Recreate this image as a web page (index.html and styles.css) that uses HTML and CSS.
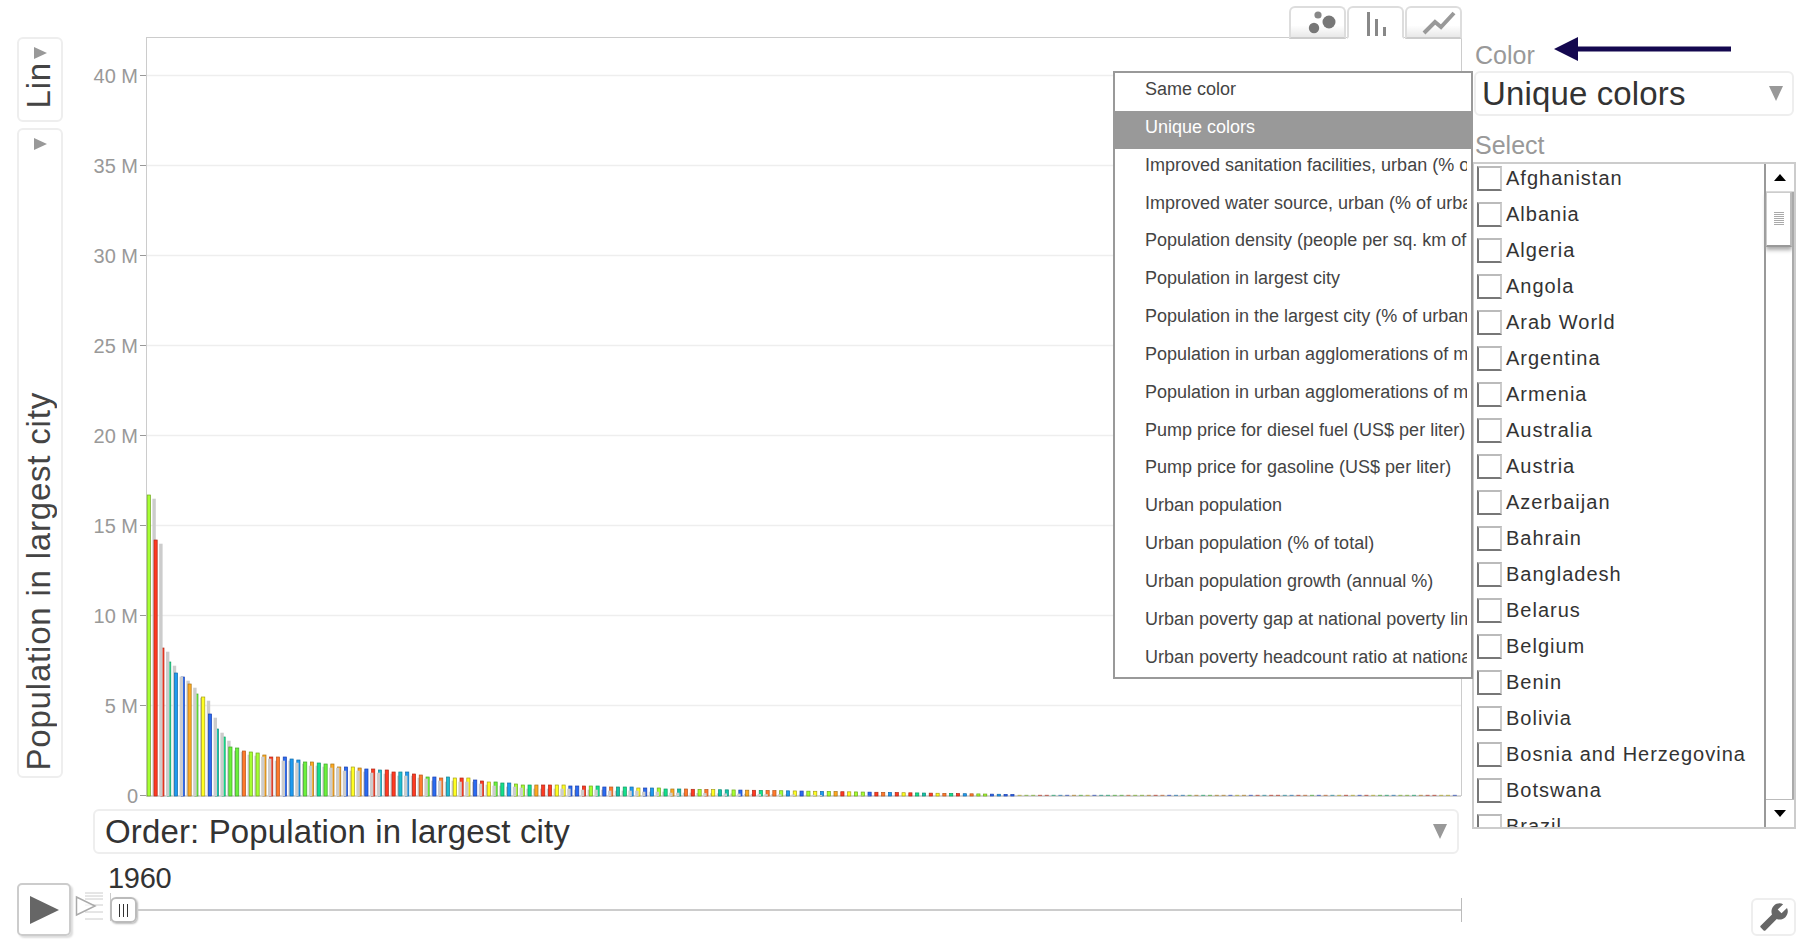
FILE: index.html
```html
<!DOCTYPE html>
<html lang="en">
<head>
  <meta charset="UTF-8">
  <title>Motion chart</title>
  <link rel="stylesheet" href="styles.css">
</head>
<body>
  <div class="main">
    <!-- Y axis controls -->
    <div class="rail">
      <div class="rail-box rail-scale">
        <span class="tri-right"></span>
        <span class="rail-label">Lin</span>
      </div>
      <div class="rail-box rail-axis">
        <span class="tri-right"></span>
        <span class="rail-label">Population in largest city</span>
      </div>
    </div>

    <!-- Chart -->
    <div class="chart-col">
      <div class="tabs">
        <div class="tab">
          <svg class="tab-bubbles" width="30" height="26" viewBox="0 0 30 26"><circle cx="10" cy="5" r="3.6" fill="#888"/><circle cx="21" cy="12" r="6.5" fill="#777"/><circle cx="6" cy="18" r="5.2" fill="#777"/></svg>
        </div>
        <div class="tab tab-active">
          <svg width="30" height="26" viewBox="0 0 30 26"><rect x="6" y="2" width="3" height="24" fill="#888"/><rect x="14" y="9" width="3" height="17" fill="#888"/><rect x="22" y="17" width="3" height="9" fill="#888"/></svg>
        </div>
        <div class="tab">
          <svg class="tab-line" width="34" height="26" viewBox="0 0 34 26"><polyline points="2,23 13,12 19,17 32,3" fill="none" stroke="#999" stroke-width="4"/></svg>
        </div>
      </div>
      <svg id="plot" class="plot" width="1369" height="770" viewBox="93 37 1369 770"></svg>
      <div class="dropdown dropdown-order">
        <span>Order: Population in largest city</span>
        <span class="tri-down"></span>
      </div>
    </div>

    <!-- Color and select -->
    <div class="side">
      <div class="side-label">Color</div>
      <div class="dropdown dropdown-color">
        <span>Unique colors</span>
        <span class="tri-down"></span>
      </div>
      <div class="side-label side-label-select">Select</div>
      <div class="list">
        <div class="list-rows">
          <div class="row"><span class="check"></span>Afghanistan</div>
          <div class="row"><span class="check"></span>Albania</div>
          <div class="row"><span class="check"></span>Algeria</div>
          <div class="row"><span class="check"></span>Angola</div>
          <div class="row"><span class="check"></span>Arab World</div>
          <div class="row"><span class="check"></span>Argentina</div>
          <div class="row"><span class="check"></span>Armenia</div>
          <div class="row"><span class="check"></span>Australia</div>
          <div class="row"><span class="check"></span>Austria</div>
          <div class="row"><span class="check"></span>Azerbaijan</div>
          <div class="row"><span class="check"></span>Bahrain</div>
          <div class="row"><span class="check"></span>Bangladesh</div>
          <div class="row"><span class="check"></span>Belarus</div>
          <div class="row"><span class="check"></span>Belgium</div>
          <div class="row"><span class="check"></span>Benin</div>
          <div class="row"><span class="check"></span>Bolivia</div>
          <div class="row"><span class="check"></span>Bosnia and Herzegovina</div>
          <div class="row"><span class="check"></span>Botswana</div>
          <div class="row"><span class="check"></span>Brazil</div>
        </div>
        <div class="scrollbar">
          <div class="scroll-btn"><span class="arrow-up"></span></div>
          <div class="scroll-track">
            <div class="scroll-thumb"><span class="grip"></span></div>
          </div>
          <div class="scroll-btn scroll-btn-down"><span class="arrow-down"></span></div>
        </div>
      </div>
      <!-- Annotation arrow -->
      <svg class="note-arrow" width="178" height="26" viewBox="0 0 178 26"><polygon points="0,13 24,1 24,10.5 177,10.5 177,15.5 24,15.5 24,25" fill="#14084f"/></svg>
    </div>

    <!-- Open color menu -->
    <div class="menu">
      <div class="menu-item"><span>Same color</span></div>
      <div class="menu-item selected"><span>Unique colors</span></div>
      <div class="menu-item"><span>Improved sanitation facilities, urban (% of urban population with access)</span></div>
      <div class="menu-item"><span>Improved water source, urban (% of urban population with access)</span></div>
      <div class="menu-item"><span>Population density (people per sq. km of land area)</span></div>
      <div class="menu-item"><span>Population in largest city</span></div>
      <div class="menu-item"><span>Population in the largest city (% of urban population)</span></div>
      <div class="menu-item"><span>Population in urban agglomerations of more than 1 million</span></div>
      <div class="menu-item"><span>Population in urban agglomerations of more than 1 million (%)</span></div>
      <div class="menu-item"><span>Pump price for diesel fuel (US$ per liter)</span></div>
      <div class="menu-item"><span>Pump price for gasoline (US$ per liter)</span></div>
      <div class="menu-item"><span>Urban population</span></div>
      <div class="menu-item"><span>Urban population (% of total)</span></div>
      <div class="menu-item"><span>Urban population growth (annual %)</span></div>
      <div class="menu-item"><span>Urban poverty gap at national poverty line (%)</span></div>
      <div class="menu-item"><span>Urban poverty headcount ratio at national poverty line</span></div>
    </div>
  </div>

  <!-- Player -->
  <div class="player">
    <div class="play-btn"><span class="play-tri"></span></div>
    <svg class="speed" width="37" height="36" viewBox="0 0 37 36">
      <g stroke="#ccc" stroke-width="1" fill="none">
        <path d="M10 3H28M10 6H28M10 9H28M10 15H28M10 22H28M10 29H28"/>
        <path d="M35.5 3V31"/>
      </g>
      <polygon points="1.5,7 1.5,25 20,16" fill="#fff" fill-opacity=".7" stroke="#aaa" stroke-width="1.5"/>
    </svg>
    <div class="slider">
      <div class="year">1960</div>
      <div class="track">
        <div class="thumb"><span class="grip-v"></span></div>
        <div class="track-line"></div>
        <div class="track-end"></div>
      </div>
    </div>
    <div class="wrench-btn">
      <svg width="30" height="30" viewBox="0 0 24 24"><path transform="translate(24 0) scale(-1 1)" d="M22.7 19l-9.1-9.1c.9-2.3.4-5-1.5-6.9-2-2-5-2.4-7.4-1.3L9 6 6 9 1.6 4.7C.4 7.1.9 10.1 2.9 12.1c1.9 1.9 4.6 2.4 6.9 1.5l9.1 9.1c.4.4 1 .4 1.4 0l2.3-2.3c.5-.4.5-1.1.1-1.4z" fill="#666"/></svg>
    </div>
  </div>

  <script src="chart.js"></script>
</body>
</html>
```

FILE: styles.css
```css
body {
  margin: 0;
  height: 948px;
  overflow: hidden;
  background: white;
  font-family: "Liberation Sans", Arial, sans-serif;
  color: #333;
}

.main {
  position: relative;
  display: flex;
  height: 861px;
}

/* Left rail */
.rail {
  width: 46px;
  margin-left: 17px;
  padding-top: 37px;
  display: flex;
  flex-direction: column;
  gap: 6px;
}
.rail-box {
  box-sizing: border-box;
  border: 2px solid #eee;
  border-radius: 6px;
  display: flex;
  flex-direction: column;
  align-items: center;
  justify-content: space-between;
  padding-top: 8px;
}
.rail-scale {
  height: 85px;
  padding-bottom: 12px;
}
.rail-axis {
  height: 650px;
  padding-bottom: 6px;
}
.rail-label {
  writing-mode: vertical-rl;
  transform: rotate(180deg);
  margin-right: 2px;
  font-size: 33px;
  line-height: 34px;
  letter-spacing: 0.8px;
  white-space: nowrap;
  color: #444;
}
.tri-right {
  width: 0;
  height: 0;
  border-left: 13px solid #999;
  border-top: 6.5px solid transparent;
  border-bottom: 6.5px solid transparent;
}
.tri-down {
  width: 0;
  height: 0;
  border-top: 15px solid #999;
  border-left: 7.5px solid transparent;
  border-right: 7.5px solid transparent;
}

/* Chart */
.chart-col {
  width: 1369px;
  margin-left: 30px;
  padding-top: 6px;
}
.tabs {
  position: relative;
  z-index: 2;
  display: flex;
  justify-content: flex-end;
  gap: 1px;
  height: 33px;
  margin-bottom: -2px;
}
.tab {
  box-sizing: border-box;
  width: 57px;
  height: 33px;
  display: flex;
  align-items: center;
  justify-content: center;
  border: 2px solid #ddd;
  border-bottom: 2px solid #ccc;
  border-radius: 6px 6px 0 0;
  background: linear-gradient(#fff 60%, #e8e8e8);
}
.tab-active {
  background: white;
  border-bottom-color: white;
}
.tab-bubbles {
  margin-left: 10px;
}
.tab-line {
  margin-left: 10px;
}
.plot {
  display: block;
  font-family: "Liberation Sans", Arial, sans-serif;
}

.dropdown {
  box-sizing: border-box;
  display: flex;
  align-items: center;
  justify-content: space-between;
  height: 45px;
  border: 2px solid #eee;
  border-radius: 6px;
  font-size: 33px;
  letter-spacing: 0.14px;
}
.dropdown-order {
  width: 1366px;
  margin-top: 2px;
  padding: 0 10px 0 10px;
}

/* Right column */
.side {
  position: relative;
  width: 324px;
  margin-left: 10px;
}
.side-label {
  margin: 41px 0 0 3px;
  font-size: 25px;
  line-height: 28px;
  height: 30px;
  color: #999;
}
.side-label-select {
  margin-top: 15px;
}
.dropdown-color {
  width: 320px;
  margin-left: 2px;
  padding: 0 9px 0 6px;
}
.note-arrow {
  position: absolute;
  left: 82px;
  top: 36px;
}

.list {
  box-sizing: border-box;
  display: flex;
  height: 667px;
  margin-top: 1px;
  border: 2px solid #ccc;
  overflow: hidden;
}
.list-rows {
  flex: 1;
  margin-top: -4px;
}
.row {
  display: flex;
  align-items: center;
  height: 36px;
  font-size: 20px;
  letter-spacing: 1px;
  padding-left: 3px;
}
.check {
  box-sizing: border-box;
  width: 25px;
  height: 25px;
  margin: 1px 4px 0 0;
  border: 2px solid #777;
  border-top-color: #bbb;
  border-right-color: #ccc;
}

.scrollbar {
  width: 28px;
  display: flex;
  flex-direction: column;
  border-left: 2px solid #999;
}
.scroll-btn {
  height: 27px;
  display: flex;
  align-items: center;
  justify-content: center;
  border-bottom: 1px solid #ddd;
}
.scroll-btn-down {
  border-bottom: 0;
  border-top: 1px solid #bbb;
}
.scroll-track {
  flex: 1;
  border-right: 2px solid #aaa;
}
.scroll-thumb {
  box-sizing: border-box;
  width: 26px;
  height: 55px;
  display: flex;
  align-items: center;
  justify-content: center;
  border: 1px solid #ccc;
  border-right: 2px solid #bbb;
  border-bottom: 2px solid #999;
  box-shadow: 0 3px 4px #aaa;
  background: white;
}
.grip {
  width: 10px;
  height: 14px;
  background: repeating-linear-gradient(#aaa 0 1px, white 1px 2px);
}
.arrow-up {
  width: 0;
  height: 0;
  border-bottom: 7px solid black;
  border-left: 6px solid transparent;
  border-right: 6px solid transparent;
}
.arrow-down {
  width: 0;
  height: 0;
  border-top: 7px solid black;
  border-left: 6px solid transparent;
  border-right: 6px solid transparent;
}

/* Menu over the chart */
.menu {
  position: absolute;
  left: 1113px;
  top: 71px;
  z-index: 5;
  box-sizing: border-box;
  width: 360px;
  height: 608px;
  border: 2px solid #999;
  background: white;
}
.menu-item {
  height: 37.85px;
  padding: 0 4px 0 30px;
  font-size: 18px;
  line-height: 33px;
  color: #444;
}
.menu-item span {
  display: block;
  overflow: hidden;
  white-space: nowrap;
}
.menu-item.selected {
  background: #999;
  color: white;
}

/* Player */
.player {
  display: flex;
  align-items: flex-end;
  height: 75px;
  padding-left: 17px;
}
.play-btn {
  box-sizing: border-box;
  width: 54px;
  height: 53px;
  display: flex;
  align-items: center;
  justify-content: center;
  border: 2px solid #ccc;
  border-radius: 5px;
  box-shadow: 2px 2px 2px #ddd;
}
.play-tri {
  width: 0;
  height: 0;
  border-left: 29px solid #666;
  border-top: 14.5px solid transparent;
  border-bottom: 14.5px solid transparent;
}
.speed {
  margin: 0 0 10px 4px;
  flex: none;
}
.slider {
  width: 1352px;
  margin: 0 0 13px -2px;
}
.year {
  margin-left: -2px;
  font-size: 29px;
  line-height: 30px;
  letter-spacing: -0.3px;
  height: 34px;
}
.track {
  display: flex;
  align-items: center;
  height: 26px;
}
.thumb {
  box-sizing: border-box;
  flex: none;
  width: 27px;
  height: 26px;
  display: flex;
  align-items: center;
  justify-content: center;
  border: 2px solid #bbb;
  border-radius: 6px;
  box-shadow: 1px 1px 2px #bbb;
}
.grip-v {
  width: 9px;
  height: 13px;
  background: repeating-linear-gradient(90deg, #333 0 1px, white 1px 4px);
}
.track-line {
  flex: 1;
  height: 2px;
  background: #ccc;
}
.track-end {
  width: 1px;
  height: 24px;
  background: #bbb;
}
.wrench-btn {
  box-sizing: border-box;
  width: 45px;
  height: 38px;
  margin-left: 289px;
  display: flex;
  align-items: center;
  justify-content: center;
  border: 2px solid #eee;
  border-radius: 6px;
}
```

FILE: chart.js
```js
// Bar tops in page pixels, read off the picture
const tops = [495,540,648,662,673,677,684,694,697,714,729,737,747,748,751,752,753,755,757,757,757,759,760,762,762,763,764,764,
  767,767,767,768,769,769,770,770,772,772,772,774,775,777,777,778,777,778,778,778,780,781,782,782,783,783,784,785,785,785,785,785,785,785,786,786,786,786,786,787,787,787,787,787,788,788,788,788,789,789,789,789];

const colors = {
  l: ['#a6ff33', '#6fa61c'], r: ['#ff3a22', '#b02a18'], m: ['#14e08c', '#0f9a62'],
  a: ['#1f9bf0', '#146ba8'], b: ['#2a6cf0', '#1c3fb0'], g: ['#ffaa22', '#a87416'],
  n: ['#6cf03c', '#3fa52a'], y: ['#ffff22', '#a8a016'], t: ['#14c4a8', '#0e8a76'],
  c: ['#20bcd0', '#168294'], o: ['#ff7a2c', '#b8561e']
};
const seq = 'lrrmabgnybtmnnollgrobaangmng' +
  'gbygbrcrrcaronbocyrybrynmallmgrryybbrlmbotmaybalmgtorl' +
  'oyttlbgrmoolayblyalgryllbroaryrmtryomraollbabbyl';

// 1 = the bar sits in front of the grey shadows, 0 = the shadow before it covers it
const front = '1100101011001111100101010110' + '0010100111011010';

const plot = document.getElementById('plot');
let svg = '';

// grid and labels
for (let m = 0; m <= 40; m += 5) {
  const y = 795.5 - m * 18;
  if (m > 0) svg += `<line x1="146" x2="1461" y1="${y}" y2="${y}" stroke="#eee" stroke-width="1.5"/>`;
  svg += `<line x1="140" x2="146" y1="${y}" y2="${y}" stroke="#999" stroke-width="1"/>`;
  svg += `<text x="138" y="${y + 7}" text-anchor="end" font-size="20" fill="#999">${m ? m + ' M' : '0'}</text>`;
}
svg += '<path d="M146.5 37V796M146 37.5H1461.5V796" fill="none" stroke="#ccc" stroke-width="1"/>';
svg += '<line x1="146" x2="1461" y1="796" y2="796" stroke="#aaa" stroke-width="1"/>';

// bars in three layers: covered bars, shadows, front bars
let back = '', shadows = '', fronts = '';
for (let i = 0; i < 193; i++) {
  const x = 147.2 + i * 6.8;
  let top = tops[i];
  if (top === undefined) top = Math.min(789.3 + (i - 80) * 0.11, 795);
  const c = colors[seq[i % seq.length]];
  const h = 796 - top;
  if (h > 1.5) {
    const bar = `<rect x="${x}" y="${top}" width="3.2" height="${h}" fill="${c[0]}" stroke="${c[1]}" stroke-width="0.7"/>`;
    if (front[i % front.length] === '1') fronts += bar;
    else back += bar;
    shadows += `<rect x="${x + 5.2}" y="${top + 3.7}" width="3.4" height="${Math.max(h - 3.7, 0)}" fill="#ccc"/>`;
  } else {
    fronts += `<rect x="${x}" y="794.8" width="4" height="1.2" fill="${c[1]}" opacity=".6"/>`;
  }
}
plot.innerHTML = svg + back + shadows + fronts;
```
